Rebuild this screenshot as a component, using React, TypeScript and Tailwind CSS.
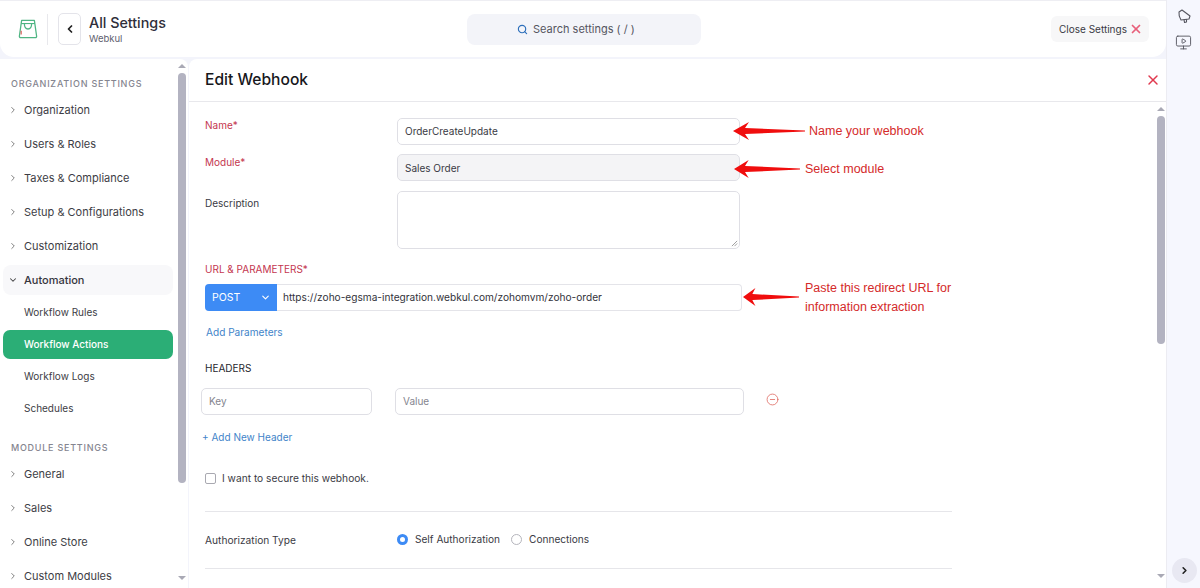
import { ChevronDown, ChevronLeft, ChevronRight, CircleMinus, MonitorPlay, Search, X } from "lucide-react";

const orgItems = ["Organization", "Users & Roles", "Taxes & Compliance", "Setup & Configurations", "Customization"];
const subItems = ["Workflow Rules", "Workflow Actions", "Workflow Logs", "Schedules"];
const moduleItems = ["General", "Sales", "Online Store", "Custom Modules"];

const NavItem = ({ label }: { label: string }) => (
  <div className="flex h-[34px] shrink-0 items-center pl-[8px] text-[11px] text-[#3d3d45]">
    <ChevronRight size={10} strokeWidth={2} className="mr-[6px] text-[#666]" />
    <span>{label}</span>
  </div>
);

const Arrow = ({ className }: { className: string }) => (
  <svg viewBox="0 0 72 18" preserveAspectRatio="none" className={className}>
    <path d="M0 9 L16 0 L12 6 L72 8.5 L72 9.5 L12 12 L16 18 Z" fill="#f00d0d" />
  </svg>
);

const ScrollUp = () => <div className="h-0 w-0 border-x-[4px] border-b-[4px] border-x-transparent border-b-[#a9a9b5]" />;
const ScrollDown = () => <div className="h-0 w-0 border-x-[4px] border-t-[4px] border-x-transparent border-t-[#a9a9b5]" />;

const TopBar = () => (
  <div className="flex h-[57px] shrink-0 items-center rounded-b-[14px] border-t border-[#eeeef3] bg-white pl-[18px] pr-[17px]">
    <svg viewBox="0 0 22 22" className="h-[20px] w-[20px]" fill="none">
      <path d="M4 1.5 H18 L20.5 19 Q20.6 20.5 19 20.5 H3 Q1.4 20.5 1.5 19 Z" stroke="#4fb583" strokeWidth="1.4" strokeLinejoin="round" />
      <path d="M3.4 5 H18.6" stroke="#4fb583" strokeWidth="1.2" />
      <path d="M7 5 Q7 11 11 11 Q15 11 15 5" stroke="#4fb583" strokeWidth="1.4" />
      <path d="M3.5 13 V17" stroke="#d9534f" strokeWidth="1.2" />
    </svg>
    <div className="ml-[9px] h-[31px] w-px bg-[#e8e8ec]" />
    <div className="ml-[10px] flex h-[32px] w-[23px] items-center justify-center rounded-[5px] border border-[#e4e4ea]">
      <ChevronLeft size={12} strokeWidth={3.5} className="text-[#222]" />
    </div>
    <div className="ml-[8px] w-[378px]">
      <div className="text-[14.3px] font-medium leading-[18px] text-[#2f2f3b]">All Settings</div>
      <div className="text-[9.5px] leading-[13px] text-[#5f5f70]">Webkul</div>
    </div>
    <div className="flex h-[31px] w-[234px] items-center gap-[5px] rounded-[8px] bg-[#f3f4f9] pl-[50px] text-[11px] text-[#55555f]">
      <Search size={11} strokeWidth={2.5} className="text-[#2d6fbb]" />
      <span>Search settings ( / )</span>
    </div>
    <div className="ml-auto flex h-[26px] w-[98px] items-center gap-[2px] rounded-[6px] bg-[#f7f7f8] pl-[8px] text-[10px] text-[#3a3a44]">
      <span>Close Settings</span>
      <X size={14} strokeWidth={3} className="text-[#e8607a]" />
    </div>
  </div>
);

const Sidebar = () => (
  <aside className="relative flex h-full w-[188px] shrink-0 flex-col overflow-hidden rounded-tr-[8px] bg-white">
    <div className="flex h-[34px] shrink-0 items-end pb-[3px] pl-[11px] text-[9px] font-medium tracking-[0.75px] text-[#85858f]">ORGANIZATION SETTINGS</div>
    {orgItems.map((item) => (
      <NavItem key={item} label={item} />
    ))}
    <div className="mx-[3px] mb-px mt-[2px] flex h-[30px] w-[170px] shrink-0 items-center rounded-[8px] bg-[#f8f8fa] pl-[5px] text-[11px] font-medium text-[#35353d]">
      <ChevronDown size={10} strokeWidth={2.5} className="mr-[6px] text-[#444]" />
      <span>Automation</span>
    </div>
    {subItems.map((item) =>
      item === "Workflow Actions" ? (
        <div key={item} className="mx-[3px] mb-px mt-[2px] flex h-[29px] w-[170px] shrink-0 items-center rounded-[7px] bg-[#2bae76] pl-[21px] text-[10px] font-medium text-white">
          {item}
        </div>
      ) : (
        <div key={item} className="flex h-[32px] shrink-0 items-center pl-[24px] text-[10px] text-[#3d3d45]">
          {item}
        </div>
      ),
    )}
    <div className="flex h-[30px] shrink-0 items-end pl-[11px] text-[9px] font-medium tracking-[0.75px] text-[#85858f]">MODULE SETTINGS</div>
    <div className="h-[3px] shrink-0" />
    {moduleItems.map((item) => (
      <NavItem key={item} label={item} />
    ))}
    <div className="absolute right-[2px] top-0 flex h-full w-[8px] flex-col items-center">
      <div className="mt-[5px]"><ScrollUp /></div>
      <div className="mt-[5px] h-[410px] w-[8px] rounded-[4px] bg-[#b3b3c1]" />
      <div className="mt-[93px]"><ScrollDown /></div>
    </div>
  </aside>
);

const inputClass = "flex items-center rounded-[5px] border border-[#dfdfe5] px-[7px] text-[10px] text-[#3a3a44]";

const WebhookForm = () => (
  <main className="relative flex h-full flex-1 flex-col overflow-hidden rounded-tl-[8px] bg-white">
    <div className="flex h-[43px] shrink-0 items-center justify-between border-b border-[#e8e8ec] pl-[16px] pr-[5px]">
      <h1 className="text-[15.6px] font-medium text-[#17171c]">Edit Webhook</h1>
      <X size={16} strokeWidth={2.2} className="text-[#e0394f]" />
    </div>

    <div className="flex flex-col pl-[16px] pt-[16px]">
      <div className="flex h-[27px] w-[535px]">
        <label className="w-[192px] text-[10px] leading-[14px] text-[#c4364f]">Name*</label>
        <div className={`${inputClass} h-[27px] w-[343px]`}>OrderCreateUpdate</div>
      </div>
      <div className="mt-[9px] flex h-[27px] w-[535px]">
        <label className="w-[192px] pt-[1px] text-[10px] leading-[14px] text-[#c4364f]">Module*</label>
        <div className={`${inputClass} h-[27px] w-[343px] bg-[#f4f4f6] pt-px`}>Sales Order</div>
      </div>
      <div className="mt-[10px] flex h-[58px] w-[535px]">
        <label className="w-[192px] pt-[5px] text-[10px] leading-[14px] text-[#3a3a44]">Description</label>
        <div className="relative h-[58px] w-[343px] rounded-[5px] border border-[#dfdfe5]">
          <svg viewBox="0 0 8 8" className="absolute bottom-[1px] right-[1px] h-[7px] w-[7px]" stroke="#777" strokeWidth="0.8">
            <path d="M1 7 L7 1 M4 7 L7 4" />
          </svg>
        </div>
      </div>
      <label className="mt-[13px] text-[10px] leading-[14px] text-[#c4364f]">URL &amp; PARAMETERS*</label>
      <div className="mt-[8px] flex h-[27px] w-[537px]">
        <div className="flex h-[27px] w-[72px] items-center justify-between rounded-l-[4px] bg-[#3d8bf5] pl-[7px] pr-[6px] text-[10.5px] text-white">
          <span>POST</span>
          <ChevronDown size={11} strokeWidth={2.5} />
        </div>
        <div className="flex h-[27px] flex-1 items-center rounded-r-[4px] border border-l-0 border-[#e4e4e9] pl-[6px] text-[10.15px] text-[#33333b]">
          https://zoho-egsma-integration.webkul.com/zohomvm/zoho-order
        </div>
      </div>
      <div className="mt-[15px] pl-px text-[10.1px] leading-[13px] text-[#3f84c9]">Add Parameters</div>
      <div className="mt-[23px] text-[10px] leading-[13px] text-[#26262c]">HEADERS</div>
      <div className="-ml-[4px] mt-[13px] flex h-[27px] items-center">
        <div className={`${inputClass} h-[27px] w-[171px] text-[#85858f]`}>Key</div>
        <div className={`${inputClass} ml-[23px] h-[27px] w-[349px] text-[#85858f]`}>Value</div>
        <CircleMinus size={13} strokeWidth={1.5} className="-mt-[5px] ml-[22px] text-[#df6b63]" />
      </div>
      <div className="-ml-[3px] mt-[16px] text-[10px] leading-[13px] text-[#3f84c9]">+ Add New Header</div>
      <div className="mt-[28px] flex items-center gap-[6px] text-[10.2px] leading-[13px] text-[#3a3a44]">
        <div className="h-[11px] w-[11px] rounded-[2px] border border-[#a9a9b1]" />
        <span>I want to secure this webhook.</span>
      </div>
      <div className="mt-[26px] h-px w-[747px] bg-[#e6e6ea]" />
      <div className="mt-[21px] flex h-[13px] w-[747px] items-center text-[10.1px] text-[#3a3a44]">
        <span className="w-[192px] pt-[3px] text-[10.2px]">Authorization Type</span>
        <div className="flex h-[11px] w-[11px] items-center justify-center rounded-full bg-[#3d8bf5]">
          <div className="h-[5px] w-[5px] rounded-full bg-white" />
        </div>
        <span className="ml-[7px]">Self Authorization</span>
        <div className="ml-[11px] h-[11px] w-[11px] rounded-full border border-[#b5b5bc]" />
        <span className="ml-[7px]">Connections</span>
      </div>
      <div className="mt-[22px] h-px w-[747px] bg-[#e6e6ea]" />
    </div>

    {/* red notes drawn on top of the screenshot */}
    <Arrow className="absolute left-[544px] top-[63px] h-[18px] w-[72px]" />
    <span className="absolute left-[620px] top-[63px] font-['Liberation_Sans',sans-serif] text-[12.5px] text-[#d42a2a]">Name your webhook</span>
    <Arrow className="absolute left-[545px] top-[101px] h-[18px] w-[66px]" />
    <span className="absolute left-[616px] top-[101px] font-['Liberation_Sans',sans-serif] text-[12.5px] text-[#d42a2a]">Select module</span>
    <Arrow className="absolute left-[554px] top-[229px] h-[18px] w-[56px]" />
    <span className="absolute left-[616px] top-[220px] font-['Liberation_Sans',sans-serif] text-[12.5px] leading-[19px] text-[#d42a2a]">
      Paste this redirect URL for
      <br />
      information extraction
    </span>

    <div className="absolute right-[1px] top-[43px] flex h-[calc(100%-43px)] w-[8px] flex-col items-center">
      <div className="mt-[5px]"><ScrollUp /></div>
      <div className="mt-[5px] h-[228px] w-[8px] rounded-[4px] bg-[#b3b3c1]" />
      <div className="mt-[230px]"><ScrollDown /></div>
    </div>
  </main>
);

const RightRail = () => (
  <div className="relative flex h-full w-[34px] shrink-0 flex-col items-center border-l border-[#ececf2] bg-[#f6f7fe] pt-[9px] text-[#55555f]">
    <svg viewBox="0 0 14 14" fill="none" stroke="currentColor" strokeWidth="1.1" strokeLinejoin="round" className="h-[14px] w-[14px]">
      <path d="M2 3 L5 1 L13 7 L12 10 L4 11 Q1.5 7 2 3 Z" />
      <path d="M7 10.6 L7.5 13.5 L9.5 13 L9.5 10.2" />
    </svg>
    <MonitorPlay size={17} strokeWidth={1.3} className="mt-[11px]" />
    <div className="absolute bottom-[5px] left-[5px] flex h-[25px] w-[25px] items-center justify-center rounded-full bg-[#e8e8f2]">
      <ChevronRight size={11} strokeWidth={3.5} className="text-[#222]" />
    </div>
  </div>
);

export default function App() {
  return (
    <div className="flex h-[588px] w-[1200px] overflow-hidden bg-[#f3f4fb] font-['Inter',sans-serif]">
      <div className="flex h-full min-w-0 flex-1 flex-col">
        <TopBar />
        <div className="mt-[2px] flex min-h-0 flex-1 gap-px">
          <Sidebar />
          <WebhookForm />
        </div>
      </div>
      <RightRail />
    </div>
  );
}
